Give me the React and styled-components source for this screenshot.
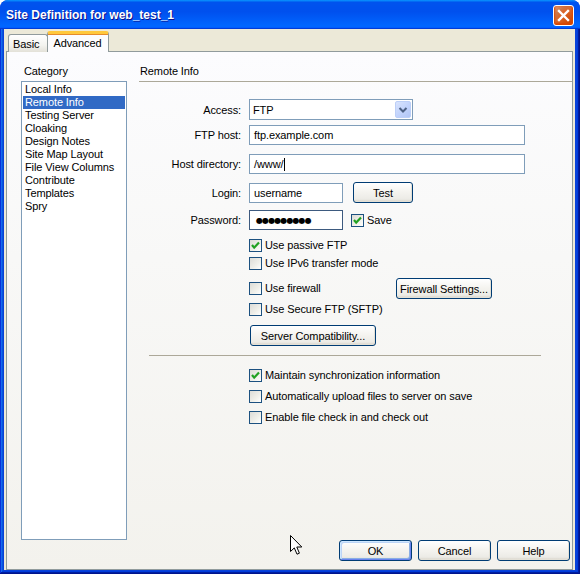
import styled, { createGlobalStyle } from "styled-components";

const GlobalStyle = createGlobalStyle`
  html, body {
    margin: 0;
    padding: 0;
    background: #ffffff;
  }
  body {
    font-family: "Liberation Sans", Arial, sans-serif;
    font-size: 11px;
    letter-spacing: -0.1px;
    color: #000;
  }
`;

const categories = [
  "Local Info",
  "Remote Info",
  "Testing Server",
  "Cloaking",
  "Design Notes",
  "Site Map Layout",
  "File View Columns",
  "Contribute",
  "Templates",
  "Spry",
];

const Check = ({ checked }) => (
  <CheckBox>
    {checked && (
      <svg width="11" height="11" viewBox="0 0 11 11">
        <path d="M2 5 L4.2 7.6 L9 2.6" fill="none" stroke="#21A121" strokeWidth="2.2" />
      </svg>
    )}
  </CheckBox>
);

const CheckItem = ({ checked, children, width }) => (
  <CheckLabel $width={width}>
    <Check checked={checked} />
    <span>{children}</span>
  </CheckLabel>
);

const App = () => {
  return (
    <>
      <GlobalStyle />
      <Window>
        <TitleBar>
          <Title>Site Definition for web_test_1</Title>
          <CloseButton>
            <svg width="13" height="13" viewBox="0 0 13 13">
              <path d="M2 2 L11 11 M11 2 L2 11" stroke="#fff" strokeWidth="2.4" strokeLinecap="square" />
            </svg>
          </CloseButton>
        </TitleBar>
        <Frame>
          <Client>
            <TabStrip>
              <Tab>Basic</Tab>
              <Tab $active>Advanced</Tab>
            </TabStrip>
            <Panel>
              <Body>
                <Sidebar>
                  <SectionLabel>Category</SectionLabel>
                  <List>
                    {categories.map((c) => (
                      <ListItem key={c} $selected={c === "Remote Info"}>
                        {c}
                      </ListItem>
                    ))}
                  </List>
                </Sidebar>
                <Content>
                  <Header>Remote Info</Header>
                  <Form>
                    <FieldRow>
                      <FieldLabel>Access:</FieldLabel>
                      <Select>
                        <SelectValue>FTP</SelectValue>
                        <DropButton>
                          <svg width="10" height="8" viewBox="0 0 10 8">
                            <path d="M1.5 2 L5 5.5 L8.5 2" fill="none" stroke="#4D6185" strokeWidth="2" />
                          </svg>
                        </DropButton>
                      </Select>
                    </FieldRow>
                    <FieldRow $mt={5}>
                      <FieldLabel>FTP host:</FieldLabel>
                      <TextBox $width={276}>ftp.example.com</TextBox>
                    </FieldRow>
                    <FieldRow $mt={9}>
                      <FieldLabel>Host directory:</FieldLabel>
                      <TextBox $width={276}>
                        /www/
                        <Caret />
                      </TextBox>
                    </FieldRow>
                    <FieldRow $mt={8}>
                      <FieldLabel>Login:</FieldLabel>
                      <TextBox $width={94}>username</TextBox>
                      <Button $width={60} $ml={10}>
                        Test
                      </Button>
                    </FieldRow>
                    <FieldRow $mt={7}>
                      <FieldLabel>Password:</FieldLabel>
                      <TextBox $width={94} $focused>
                        <Dots>●●●●●●●●●</Dots>
                      </TextBox>
                      <SaveWrap>
                        <CheckItem checked>Save</CheckItem>
                      </SaveWrap>
                    </FieldRow>
                  </Form>

                  <Options>
                    <OptionRow $mt={9}>
                      <CheckItem checked>Use passive FTP</CheckItem>
                    </OptionRow>
                    <OptionRow $mt={5}>
                      <CheckItem>Use IPv6 transfer mode</CheckItem>
                    </OptionRow>
                    <OptionRow $mt={8}>
                      <CheckItem width={147}>Use firewall</CheckItem>
                      <Button $width={96}>Firewall Settings...</Button>
                    </OptionRow>
                    <OptionRow $mt={4}>
                      <CheckItem>Use Secure FTP (SFTP)</CheckItem>
                    </OptionRow>
                    <OptionRow $mt={9}>
                      <Button $width={126} $ml={1}>
                        Server Compatibility...
                      </Button>
                    </OptionRow>
                  </Options>

                  <Separator />

                  <Options>
                    <OptionRow $mt={13}>
                      <CheckItem checked>Maintain synchronization information</CheckItem>
                    </OptionRow>
                    <OptionRow $mt={8}>
                      <CheckItem>Automatically upload files to server on save</CheckItem>
                    </OptionRow>
                    <OptionRow $mt={8}>
                      <CheckItem>Enable file check in and check out</CheckItem>
                    </OptionRow>
                  </Options>
                </Content>
              </Body>
              <Footer>
                <Button $width={73} $default>
                  OK
                </Button>
                <Button $width={73}>Cancel</Button>
                <Button $width={73}>Help</Button>
              </Footer>
            </Panel>
          </Client>
        </Frame>
        <Pointer>
          <svg width="13" height="21" viewBox="0 0 13 21">
            <path
              d="M0.5 0.5 L0.5 16.5 L4.3 12.9 L7 19.2 L9.4 18.2 L6.8 12 L11.8 12 Z"
              fill="#fff"
              stroke="#000"
              strokeWidth="1"
              strokeLinejoin="miter"
            />
          </svg>
        </Pointer>
      </Window>
    </>
  );
};

const Window = styled.div`
  position: relative;
  width: 580px;
  height: 574px;
  display: flex;
  flex-direction: column;
  border-radius: 8px 8px 0 0;
  overflow: hidden;
  background: #0831d9;
`;

const TitleBar = styled.div`
  height: 29px;
  flex: none;
  display: flex;
  align-items: center;
  justify-content: space-between;
  padding: 0 6px 0 6px;
  box-sizing: border-box;
  background: linear-gradient(
    180deg,
    #0997ff 0%,
    #0053ee 8%,
    #0050ee 40%,
    #0066ff 88%,
    #0066ff 93%,
    #005bff 95%,
    #003dd7 96%,
    #003dd7 100%
  );
`;

const Title = styled.div`
  font-family: "Liberation Sans", Arial, sans-serif;
  font-weight: bold;
  font-size: 12px;
  color: #fff;
  text-shadow: 1px 1px #0f1089;
  letter-spacing: 0;
  padding-top: 1px;
`;

const CloseButton = styled.div`
  width: 21px;
  height: 21px;
  box-sizing: border-box;
  border: 1px solid #fff;
  border-radius: 3px;
  display: flex;
  align-items: center;
  justify-content: center;
  margin-top: 2px;
  background: radial-gradient(circle at 90% 90%, #cc4600 0%, #dc6527 55%, #cd7546 70%, #e7a07c 100%);
  box-shadow: inset 0 -1px 2px 1px #da4600;
`;

const Frame = styled.div`
  flex: 1;
  display: flex;
  padding: 0 5px 4px 4px;
  background: #0842d9;
  box-shadow: inset -1px -1px #00138c, inset 1px 0 #0831d9, inset -2px -2px #001ea0, inset 2px 0 #166aee,
    inset -3px -3px #003bda, inset 3px 0 #0855dd;
`;

const Client = styled.div`
  flex: 1;
  display: flex;
  flex-direction: column;
  padding: 0 2px;
  background: #ece9d8;
`;

const TabStrip = styled.div`
  height: 23px;
  flex: none;
  display: flex;
  align-items: flex-end;
  padding-left: 2px;
  margin-bottom: -1px;
  position: relative;
  z-index: 1;
`;

const Tab = styled.div`
  box-sizing: border-box;
  height: ${(p) => (p.$active ? "21px" : "18px")};
  padding: ${(p) => (p.$active ? "3px 6px 0 5px" : "3px 8px 0 4px")};
  border: 1px solid #919b9c;
  border-bottom: none;
  border-radius: 3px 3px 0 0;
  line-height: 13px;
  background: ${(p) =>
    p.$active ? "#fcfcfe" : "linear-gradient(180deg, #ffffff 0%, #f3f3ef 60%, #e3e1d8 100%)"};
  border-top: ${(p) => (p.$active ? "3px solid #ffc83c" : "1px solid #919b9c")};
  box-shadow: ${(p) => (p.$active ? "inset 0 1px 0 #e68b2c" : "none")};
  margin-left: ${(p) => (p.$active ? "-1px" : "0")};
`;

const Panel = styled.div`
  flex: 1;
  display: flex;
  flex-direction: column;
  border: 1px solid #919b9c;
  background: linear-gradient(180deg, #fcfcfe 0%, #f8f8f7 40%, #f3f2ed 100%);
`;

const Body = styled.div`
  flex: 1;
  display: flex;
`;

const Sidebar = styled.div`
  width: 106px;
  margin-left: 14px;
  padding-top: 13px;
  display: flex;
  flex-direction: column;
`;

const SectionLabel = styled.div`
  line-height: 13px;
  margin: 0 0 3px 3px;
`;

const List = styled.div`
  flex: 1;
  border: 1px solid #7f9db9;
  background: #fff;
  padding: 1px;
`;

const ListItem = styled.div`
  line-height: 13px;
  height: 13px;
  padding-left: 2px;
  white-space: nowrap;
  background: ${(p) => (p.$selected ? "#316ac5" : "transparent")};
  color: ${(p) => (p.$selected ? "#fff" : "#000")};
`;

const Content = styled.div`
  flex: 1;
  margin-left: 12px;
  padding-top: 13px;
`;

const Header = styled.div`
  line-height: 13px;
  padding: 0 0 3px 1px;
  border-bottom: 1px solid #aca899;
`;

const Form = styled.div`
  margin-top: 17px;
`;

const FieldRow = styled.div`
  display: flex;
  align-items: center;
  margin-top: ${(p) => p.$mt || 0}px;
`;

const FieldLabel = styled.div`
  width: 102px;
  margin-right: 8px;
  text-align: right;
  white-space: nowrap;
`;

const Select = styled.div`
  width: 164px;
  height: 21px;
  box-sizing: border-box;
  border: 1px solid #7f9db9;
  background: #fff;
  display: flex;
  align-items: center;
  padding: 1px;
`;

const SelectValue = styled.div`
  flex: 1;
  padding-left: 2px;
`;

const DropButton = styled.div`
  width: 16px;
  height: 17px;
  box-sizing: border-box;
  border: 1px solid #bccff8;
  border-radius: 2px;
  display: flex;
  align-items: center;
  justify-content: center;
  background: linear-gradient(135deg, #d9e4fd 0%, #c3d4fc 50%, #b1c6f6 100%);
`;

const TextBox = styled.div`
  width: ${(p) => p.$width}px;
  height: 20px;
  box-sizing: border-box;
  border: 1px solid ${(p) => (p.$focused ? "#3d5a7f" : "#7f9db9")};
  background: #fff;
  display: flex;
  align-items: center;
  padding-left: 4px;
  white-space: nowrap;
  overflow: hidden;
`;

const Caret = styled.span`
  display: inline-block;
  width: 1px;
  height: 13px;
  margin-left: 1px;
  background: #000;
`;

const Dots = styled.span`
  font-family: "DejaVu Sans", sans-serif;
  font-size: 8px;
  letter-spacing: -0.9px;
  padding-left: 2px;
`;

const SaveWrap = styled.div`
  margin-left: 8px;
`;

const Button = styled.div`
  width: ${(p) => p.$width}px;
  height: 21px;
  box-sizing: border-box;
  margin-left: ${(p) => p.$ml || 0}px;
  border: 1px solid #003c74;
  border-radius: 3px;
  display: flex;
  align-items: center;
  justify-content: center;
  white-space: nowrap;
  background: linear-gradient(180deg, #ffffff 0%, #f5f4f0 45%, #ecebe6 85%, #d6d0c5 100%);
  box-shadow: ${(p) =>
    p.$default
      ? "inset 1px 1px 0 #cee7ff, inset -1px -1px 0 #6982ee, inset 2px 2px 0 #bcd4f6, inset -2px -2px 0 #89ade4"
      : "inset -1px -1px 0 #e3e0d6"};
`;

const Options = styled.div`
  margin-left: 110px;
`;

const OptionRow = styled.div`
  display: flex;
  align-items: center;
  margin-top: ${(p) => p.$mt || 0}px;
`;

const CheckLabel = styled.div`
  display: flex;
  align-items: center;
  gap: 3px;
  width: ${(p) => (p.$width ? `${p.$width}px` : "auto")};
  line-height: 13px;
  white-space: nowrap;
`;

const CheckBox = styled.div`
  width: 13px;
  height: 13px;
  flex: none;
  box-sizing: border-box;
  border: 1px solid #1c5180;
  display: flex;
  align-items: center;
  justify-content: center;
  background: linear-gradient(135deg, #dcdcd7 0%, #f0f0ea 60%, #ffffff 100%);
`;

const Separator = styled.div`
  height: 1px;
  background: #aca899;
  margin: 9px 31px 0 10px;
`;

const Footer = styled.div`
  display: flex;
  justify-content: flex-end;
  gap: 6px;
  padding: 0 2px 8px 0;
`;

const Pointer = styled.div`
  position: absolute;
  left: 290px;
  top: 535px;
  width: 13px;
  height: 21px;
  pointer-events: none;
`;

export default App;
